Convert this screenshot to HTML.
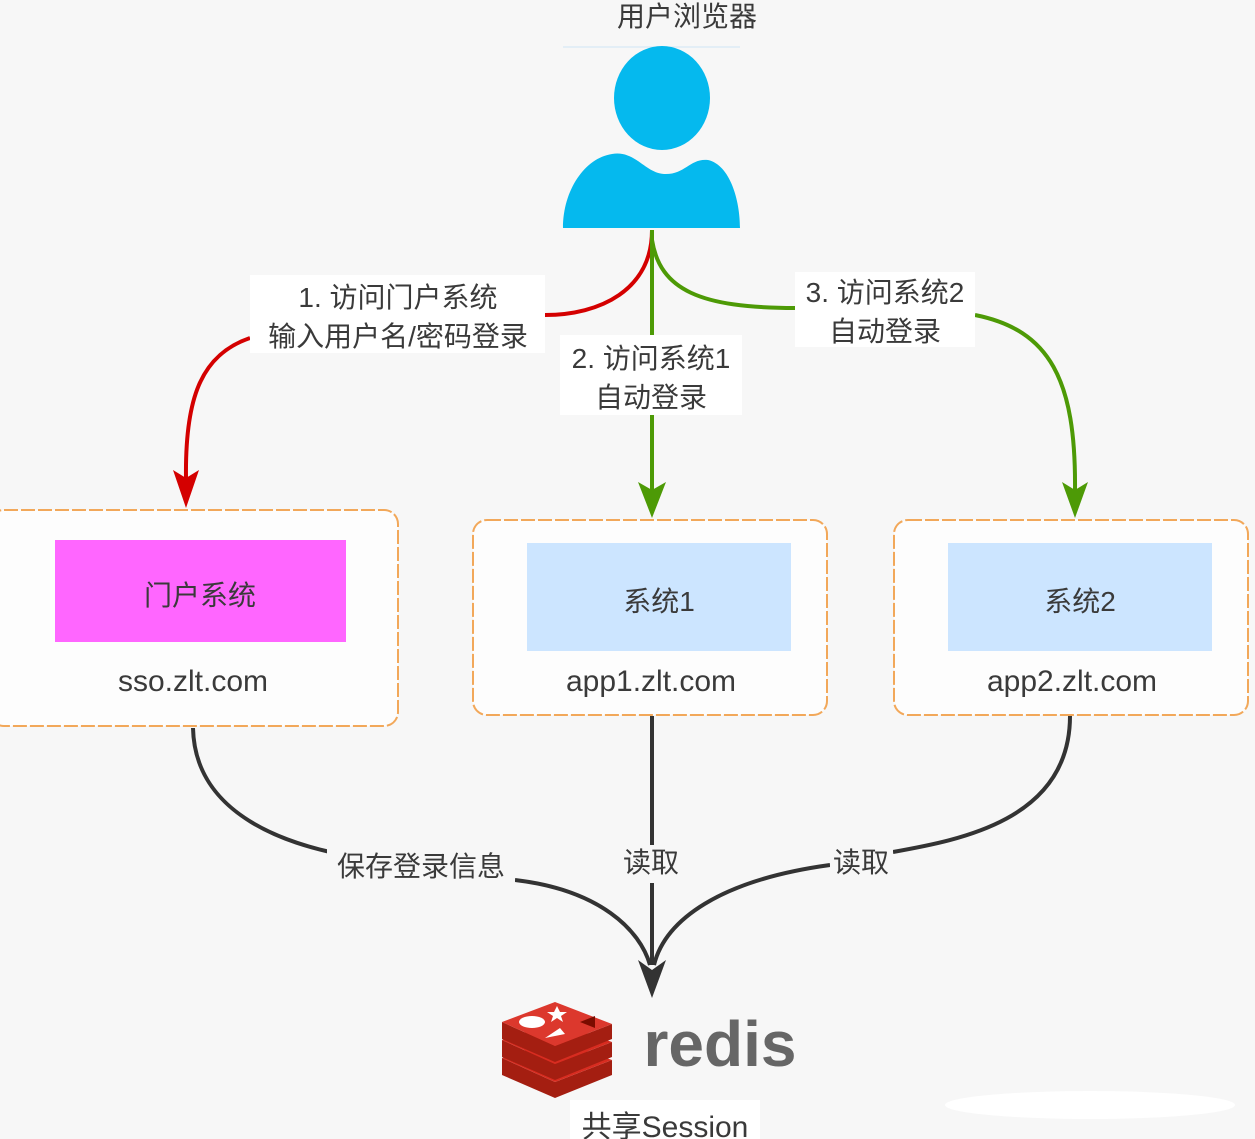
<!DOCTYPE html>
<html><head><meta charset="utf-8"><style>
html,body{margin:0;padding:0;background:#f7f7f7;}
svg{display:block}
text{font-family:"Liberation Sans","Noto Sans CJK SC",sans-serif;fill:#3a3a3a}
</style></head><body>
<svg width="1255" height="1139" viewBox="0 0 1255 1139" xmlns="http://www.w3.org/2000/svg">
<rect width="1255" height="1139" fill="#f7f7f7"/>
<text x="687" y="26" font-size="28" text-anchor="middle">用户浏览器</text>
<line x1="563" y1="47" x2="740" y2="47" stroke="#cfe6f6" stroke-width="1"/>
<!-- person -->
<ellipse cx="662" cy="98" rx="48" ry="52" fill="#05b9ee"/>
<path d="M563 228 C563 190 585 158 612 154 C635 150 645 173 664 174 C685 175 690 158 708 160 C730 165 740 200 740 228 Z" fill="#05b9ee"/>
<!-- red -->
<path d="M652 230 C652 290 600 315 545 315" fill="none" stroke="#d40000" stroke-width="4"/>
<path d="M250 338 C200 355 185 400 186 478" fill="none" stroke="#d40000" stroke-width="4"/>
<path d="M173 470 L186 508 L199 470 L186 478 Z" fill="#d40000"/>
<rect x="250" y="275" width="295" height="78" fill="#ffffff"/>
<text x="398" y="307" font-size="28" text-anchor="middle">1. 访问门户系统</text>
<text x="398" y="346" font-size="28" text-anchor="middle">输入用户名/密码登录</text>
<!-- green middle -->
<path d="M652 230 L652 490" fill="none" stroke="#4d9a06" stroke-width="4"/>
<path d="M638 482 L652 518 L666 482 L652 490 Z" fill="#4d9a06"/>
<rect x="560" y="335" width="182" height="80" fill="#ffffff"/>
<text x="651" y="368" font-size="28" text-anchor="middle">2. 访问系统1</text>
<text x="651" y="407" font-size="28" text-anchor="middle">自动登录</text>
<!-- green right -->
<path d="M652 240 C660 290 700 308 795 308" fill="none" stroke="#4d9a06" stroke-width="4"/>
<path d="M975 315 C1050 330 1076 380 1075 490" fill="none" stroke="#4d9a06" stroke-width="4"/>
<path d="M1062 482 L1075 518 L1088 482 L1075 490 Z" fill="#4d9a06"/>
<rect x="795" y="272" width="180" height="75" fill="#ffffff"/>
<text x="885" y="302" font-size="28" text-anchor="middle">3. 访问系统2</text>
<text x="885" y="341" font-size="28" text-anchor="middle">自动登录</text>
<!-- boxes -->
<rect x="-10" y="510" width="408" height="216" rx="14" fill="#fdfdfd" stroke="#f2a85a" stroke-width="2" stroke-dasharray="14 3"/>
<rect x="55" y="540" width="291" height="102" fill="#ff66ff"/>
<text x="200" y="605" font-size="28" text-anchor="middle">门户系统</text>
<text x="193" y="691" font-size="30" text-anchor="middle">sso.zlt.com</text>
<rect x="473" y="520" width="354" height="195" rx="14" fill="#fdfdfd" stroke="#f2a85a" stroke-width="2" stroke-dasharray="14 3"/>
<rect x="527" y="543" width="264" height="108" fill="#cce5ff"/>
<text x="659" y="611" font-size="28" text-anchor="middle">系统1</text>
<text x="651" y="691" font-size="30" text-anchor="middle">app1.zlt.com</text>
<rect x="894" y="520" width="354" height="195" rx="14" fill="#fdfdfd" stroke="#f2a85a" stroke-width="2" stroke-dasharray="14 3"/>
<rect x="948" y="543" width="264" height="108" fill="#cce5ff"/>
<text x="1080" y="611" font-size="28" text-anchor="middle">系统2</text>
<text x="1072" y="691" font-size="30" text-anchor="middle">app2.zlt.com</text>
<!-- black -->
<path d="M193 728 C195 820 300 845 330 852" fill="none" stroke="#333" stroke-width="4"/>
<path d="M515 880 C600 890 640 930 650 965" fill="none" stroke="#333" stroke-width="4"/>
<path d="M652 716 L652 965" fill="none" stroke="#333" stroke-width="4"/>
<path d="M1070 716 C1070 820 960 840 893 852" fill="none" stroke="#333" stroke-width="4"/>
<path d="M830 865 C720 880 665 920 654 965" fill="none" stroke="#333" stroke-width="4"/>
<path d="M638 960 L652 998 L666 960 L652 970 Z" fill="#333"/>
<rect x="327" y="845" width="188" height="40" fill="#f7f7f7"/>
<text x="421" y="876" font-size="28" text-anchor="middle">保存登录信息</text>
<rect x="618" y="845" width="66" height="38" fill="#f7f7f7"/>
<text x="651" y="872" font-size="28" text-anchor="middle">读取</text>
<rect x="830" y="845" width="63" height="38" fill="#f7f7f7"/>
<text x="861" y="872" font-size="28" text-anchor="middle">读取</text>
<!-- redis logo -->
<g>
<path d="M502 1058 L555 1082 L612 1060 L612 1075 L555 1098 L502 1075 Z" fill="#a41e11"/>
<path d="M502 1058 L555 1040 L612 1060 L555 1082 Z" fill="#d82c20"/>
<path d="M502 1040 L555 1064 L612 1042 L612 1057 L555 1080 L502 1057 Z" fill="#a41e11"/>
<path d="M502 1040 L555 1022 L612 1042 L555 1064 Z" fill="#d82c20"/>
<path d="M502 1022 L555 1046 L612 1024 L612 1039 L555 1062 L502 1039 Z" fill="#a41e11"/>
<path d="M502 1022 L555 1002 L612 1024 L555 1046 Z" fill="#dc382d"/>
<ellipse cx="532" cy="1022" rx="13" ry="6" fill="#fff"/>
<path d="M545 1038 L565 1034 L560 1028 Z" fill="#fff"/>
<path d="M557 1006 L560 1012 L567 1012 L561 1016 L563 1022 L557 1018 L551 1022 L553 1016 L547 1012 L554 1012 Z" fill="#fff"/>
<path d="M580 1022 L595 1016 L595 1028 Z" fill="#7a0c00"/>
</g>
<text x="720" y="1066" font-size="64" font-weight="bold" text-anchor="middle" style="fill:#666">redis</text>
<rect x="570" y="1100" width="190" height="39" fill="#ffffff"/>
<text x="665" y="1137" font-size="30" text-anchor="middle">共享Session</text>
<ellipse cx="1090" cy="1105" rx="145" ry="14" fill="#ffffff"/>
</svg>
</body></html>
